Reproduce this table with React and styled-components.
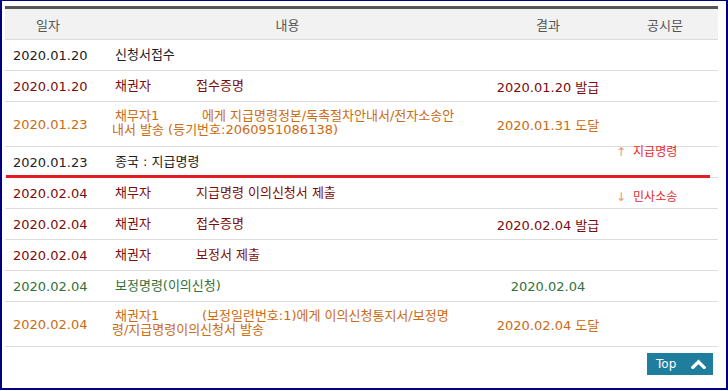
import React from "react";
import styled, { createGlobalStyle } from "styled-components";

const Global = createGlobalStyle`
  html, body { margin: 0; padding: 0; background: #fff; }
  body {
    font-family: "DejaVu Sans", "Noto Sans CJK KR", sans-serif;
    font-size: 13px;
  }
`;

const COLS = "86px 393px 128px 106px";

const Frame = styled.div`
  width: 728px;
  height: 390px;
  box-sizing: border-box;
  border-top: 1px solid #000080;
  border-left: 2px solid #000080;
  border-right: 2px solid #000080;
  border-bottom: 2px solid #000080;
  box-shadow: 0 1px 0 #cfcfcf;
  padding: 5px 8px 0 3px;
  background: #fff;
`;

const Table = styled.div`
  border-top: 3px solid #555;
`;

const HeadRow = styled.div`
  display: grid;
  grid-template-columns: ${COLS};
  height: 30px;
  background: #f2f2f2;
  border-bottom: 1px solid #dcdcdc;
  align-items: center;
`;

const HeadCell = styled.div`
  text-align: center;
  color: #555;
  font-size: 13px;
`;

const palette = {
  black: "#222222",
  maroon: "#7a0c0c",
  orange: "#cc6a12",
  green: "#33703a",
};

const Row = styled.div`
  position: relative;
  display: grid;
  grid-template-columns: ${COLS};
  height: ${(p) => (p.$tall ? 44 : 30)}px;
  border-bottom: 1px solid #dcdcdc;
  align-items: center;
  color: ${(p) => palette[p.$tone]};
`;

const DateCell = styled.div`
  padding-left: 8px;
  white-space: nowrap;
`;

const ContentCell = styled.div`
  padding-left: 24px;
  white-space: nowrap;
  line-height: 14px;
`;

const WrapLine = styled.div`
  margin-left: ${(p) => (p.$cont ? -3 : 0)}px;
  margin-top: ${(p) => (p.$first ? -2 : 0)}px;
`;

const Party = styled.span`
  display: inline-block;
  width: ${(p) => p.$w}px;
`;

const ResultCell = styled.div`
  text-align: center;
  white-space: nowrap;
`;

const Divider = styled.div`
  position: absolute;
  left: 1px;
  bottom: -1px;
  width: 704px;
  height: 3px;
  background: #e31b23;
`;

const StageLabel = styled.div`
  position: absolute;
  left: 611px;
  top: ${(p) => p.$top}px;
  font-size: 12px;
  line-height: 14px;
  color: #e8262d;
  white-space: nowrap;
`;

const Arrow = styled.span`
  color: #f0907a;
  margin-right: 7px;
`;

const Footer = styled.div`
  display: flex;
  justify-content: flex-end;
  padding: 6px 5px 0 0;
`;

const TopButton = styled.button`
  width: 66px;
  height: 22px;
  box-sizing: border-box;
  border: none;
  background: #1f7d9e;
  color: #fff;
  font-family: "DejaVu Sans", sans-serif;
  font-size: 12px;
  display: flex;
  align-items: center;
  justify-content: space-between;
  padding: 0 7px 0 9px;
  cursor: pointer;
`;

const rows = [
  { date: "2020.01.20", tone: "black", text: "신청서접수" },
  { date: "2020.01.20", tone: "maroon", party: "채권자", text: "접수증명", result: "2020.01.20 발급" },
  {
    date: "2020.01.23",
    tone: "orange",
    party: "채무자1",
    pw: 87,
    lines: ["에게 지급명령정본/독촉절차안내서/전자소송안", "내서 발송 (등기번호:2060951086138)"],
    result: "2020.01.31 도달",
  },
  { date: "2020.01.23", tone: "black", text: "종국 : 지급명령", divider: true },
  { date: "2020.02.04", tone: "maroon", party: "채무자", text: "지급명령 이의신청서 제출" },
  { date: "2020.02.04", tone: "maroon", party: "채권자", text: "접수증명", result: "2020.02.04 발급" },
  { date: "2020.02.04", tone: "maroon", party: "채권자", text: "보정서 제출" },
  { date: "2020.02.04", tone: "green", text: "보정명령(이의신청)", result: "2020.02.04" },
  {
    date: "2020.02.04",
    tone: "orange",
    party: "채권자1",
    pw: 87,
    lines: ["(보정일련번호:1)에게 이의신청통지서/보정명", "령/지급명령이의신청서 발송"],
    result: "2020.02.04 도달",
  },
];

function Content({ r }) {
  if (r.lines) {
    return (
      <ContentCell>
        <WrapLine $first>
          <Party $w={r.pw}>{r.party}</Party>
          {r.lines[0]}
        </WrapLine>
        <WrapLine $cont>{r.lines[1]}</WrapLine>
      </ContentCell>
    );
  }
  return (
    <ContentCell>
      {r.party && <Party $w={r.pw || 81}>{r.party}</Party>}
      {r.text}
    </ContentCell>
  );
}

export default function App() {
  return (
    <>
      <Global />
      <Frame>
        <Table>
          <HeadRow>
            <HeadCell>일자</HeadCell>
            <HeadCell>내용</HeadCell>
            <HeadCell>결과</HeadCell>
            <HeadCell>공시문</HeadCell>
          </HeadRow>
          {rows.map((r, i) => (
            <Row key={i} $tone={r.tone} $tall={!!r.lines}>
              <DateCell>{r.date}</DateCell>
              <Content r={r} />
              <ResultCell>{r.result || ""}</ResultCell>
              <div />
              {r.divider && (
                <>
                  <Divider />
                  <StageLabel $top={-2}>
                    <Arrow>↑</Arrow>지급명령
                  </StageLabel>
                  <StageLabel $top={43}>
                    <Arrow>↓</Arrow>민사소송
                  </StageLabel>
                </>
              )}
            </Row>
          ))}
        </Table>
        <Footer>
          <TopButton>
            <span>Top</span>
            <svg width="15" height="10" viewBox="0 0 15 10">
              <polyline
                points="1.8,8.5 7.5,2.8 13.2,8.5"
                fill="none"
                stroke="#fff"
                strokeWidth="3.2"
                strokeLinecap="square"
              />
            </svg>
          </TopButton>
        </Footer>
      </Frame>
    </>
  );
}
